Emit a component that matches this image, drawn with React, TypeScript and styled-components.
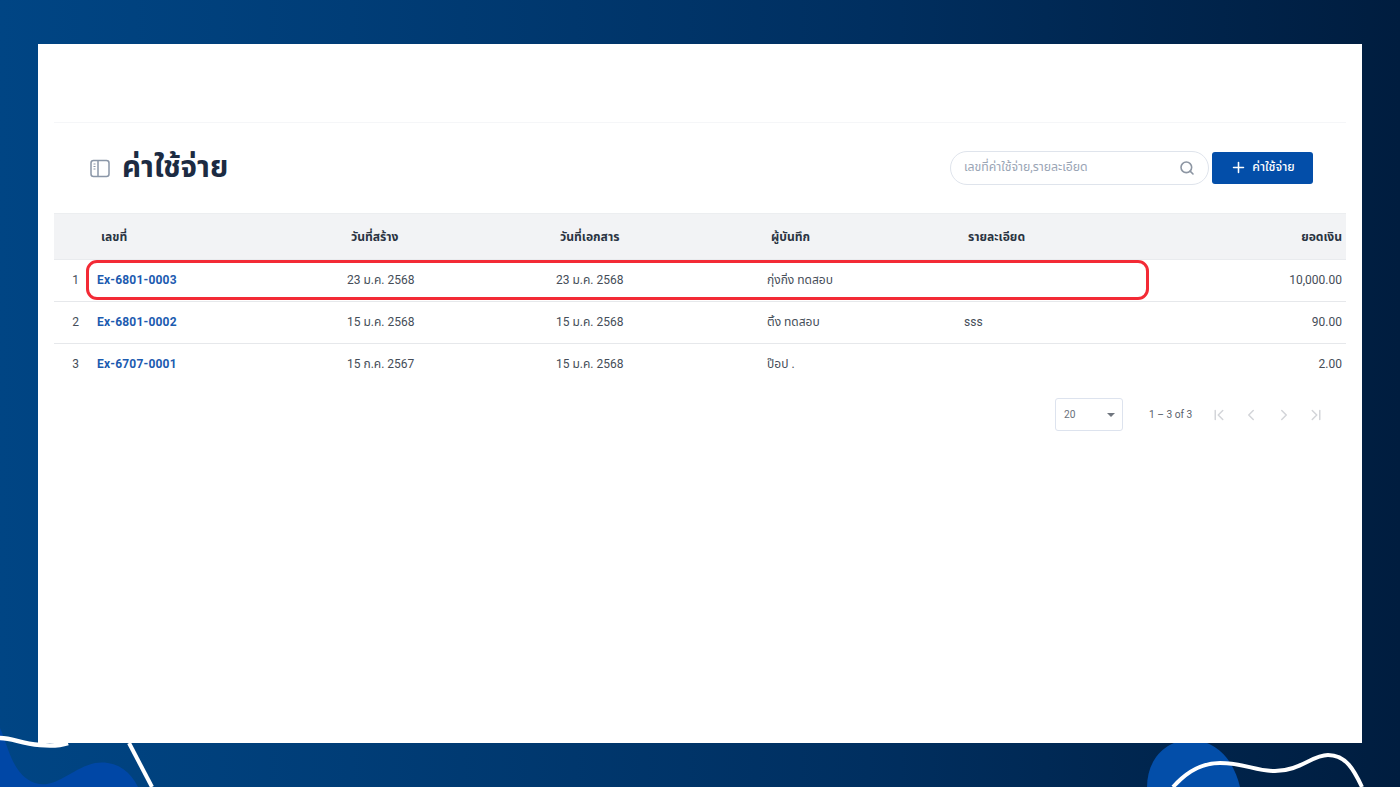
import React from "react";
import styled, { createGlobalStyle } from "styled-components";
import { ChevronLeft, ChevronRight, ChevronFirst, ChevronLast, Plus, Search } from "lucide-react";

const Global = createGlobalStyle`
  html, body { margin: 0; padding: 0; }
  body { font-family: Roboto, "Noto Sans Thai", Inter, "Noto Sans", "Liberation Sans", sans-serif; }
`;

const Stage = styled.div`
  position: relative;
  width: 1400px;
  height: 787px;
  overflow: hidden;
  box-sizing: border-box;
  padding: 44px 38px 44px 38px;
  background: linear-gradient(90deg, #004584 0%, #003d77 25%, #002f60 62%, #001d3f 100%);
`;

const Decor = styled.svg`
  position: absolute;
  left: 0;
  top: 0;
  pointer-events: none;
`;

const Panel = styled.main`
  position: relative;
  height: 100%;
  background: #fff;
  display: flex;
  flex-direction: column;
  padding: 78px 16px 0 16px;
  box-sizing: border-box;
`;

const Header = styled.header`
  border-top: 1px solid #f5f6f8;
  height: 91px;
  box-sizing: border-box;
  display: flex;
  align-items: center;
  padding: 0 33px 0 36px;
`;

const Title = styled.h1`
  margin: 0 0 3px 12px;
  font-size: 29.5px;
  line-height: 34px;
  font-weight: 700;
  color: #1c2b42;
`;

const Spacer = styled.div`
  flex: 1;
`;

const SearchBox = styled.div`
  width: 259px;
  height: 34px;
  margin-top: -1px;
  box-sizing: border-box;
  border: 1.5px solid #dfe4ec;
  border-radius: 17px;
  display: flex;
  align-items: center;
  padding: 0 13px 0 13px;
  color: #9aa5b5;
  font-size: 12.3px;
`;

const AddButton = styled.button`
  width: 101px;
  height: 32px;
  margin: -1px 0 0 3px;
  border: 0;
  border-radius: 3px;
  background: #034ea9;
  color: #fff;
  font: inherit;
  font-size: 12.3px;
  font-weight: 500;
  display: flex;
  align-items: center;
  justify-content: center;
  gap: 5px;
  padding: 0;
`;

const Row = styled.div<{ $head?: boolean; $last?: boolean }>`
  position: relative;
  display: grid;
  grid-template-columns: 43px 250px 209px 211px 197px 1fr auto;
  align-items: center;
  height: ${(p) => (p.$head ? "47px" : "42px")};
  padding-bottom: ${(p) => (p.$head ? "0" : "2px")};
  box-sizing: border-box;
  background: ${(p) => (p.$head ? "#f2f3f5" : "#fff")};
  border-bottom: 1px solid ${(p) => (p.$head ? "#e9ebee" : p.$last ? "transparent" : "#e6e8eb")};
  border-top: ${(p) => (p.$head ? "1px solid #eceef0" : "0")};
  color: #454d58;
  font-size: 12px;
`;

const HeadCell = styled.div<{ $right?: boolean }>`
  font-weight: 700;
  font-size: 12.1px;
  color: #2a3442;
  padding-left: ${(p) => (p.$right ? "0" : "4px")};
  padding-right: ${(p) => (p.$right ? "4px" : "0")};
  text-align: ${(p) => (p.$right ? "right" : "left")};
`;

const Cell = styled.div<{ $right?: boolean }>`
  padding-right: ${(p) => (p.$right ? "4px" : "0")};
  text-align: ${(p) => (p.$right ? "right" : "left")};
  white-space: nowrap;
`;

const IndexCell = styled.div`
  text-align: right;
  padding-right: 18px;
`;

const DocLink = styled.a`
  color: #1c5bb0;
  font-weight: 700;
  font-size: 12px;
  letter-spacing: 0.2px;
`;

const Highlight = styled.div`
  position: absolute;
  left: 32px;
  top: 0;
  width: 1063px;
  height: 40px;
  box-sizing: border-box;
  border: 3px solid #f32a35;
  border-radius: 11px;
`;

const Pager = styled.nav`
  display: flex;
  align-items: center;
  margin-top: 12px;
  padding-left: 1001px;
  color: #5a626d;
  font-size: 10.2px;
`;

const PageSelect = styled.div`
  width: 68px;
  height: 33px;
  box-sizing: border-box;
  border: 1px solid #dde3ee;
  border-radius: 3px;
  display: flex;
  align-items: center;
  justify-content: space-between;
  padding: 0 7px 0 8px;
  color: #6a717b;
`;

const Caret = styled.span`
  width: 0;
  height: 0;
  border-left: 4.5px solid transparent;
  border-right: 4.5px solid transparent;
  border-top: 4.5px solid #70767f;
`;

const RangeText = styled.span`
  margin-left: 26px;
  width: 51px;
  white-space: nowrap;
`;

const PageIcons = styled.div`
  display: flex;
  align-items: center;
  margin-left: 10px;
  gap: 14.3px;
  color: #d3d5d9;
`;

const rows = [
  ["1", "Ex-6801-0003", "23 ม.ค. 2568", "23 ม.ค. 2568", "กุ่งกิ่ง ทดสอบ", "", "10,000.00"],
  ["2", "Ex-6801-0002", "15 ม.ค. 2568", "15 ม.ค. 2568", "ติ้ง ทดสอบ", "sss", "90.00"],
  ["3", "Ex-6707-0001", "15 ก.ค. 2567", "15 ม.ค. 2568", "ป๊อป .", "", "2.00"],
];

export default function App() {
  return (
    <Stage>
      <Global />
      <Decor width="1400" height="787" viewBox="0 0 1400 787">
        <path d="M0 728 C8 745 12 775 35 783 C55 790 72 768 95 763 C115 760 130 770 138 787 L0 787 Z" fill="#0047a6" />
        <path d="M1147 787 C1147 760 1165 740 1190 740 C1220 740 1235 765 1240 787 Z" fill="#034ea9" />
      </Decor>
      <Panel>
        <Header>
          <svg width="20" height="19" viewBox="0 0 20 19" fill="none" stroke="#8b97a8" strokeWidth="1.5">
            <rect x="1" y="1.5" width="18" height="16" rx="2.5" />
            <path d="M8 1.5v16" />
            <path d="M3.5 5h2M3.5 7.5h2M3.5 10h2" strokeWidth="1" />
          </svg>
          <Title>ค่าใช้จ่าย</Title>
          <Spacer />
          <SearchBox>
            <span>เลขที่ค่าใช้จ่าย,รายละเอียด</span>
            <Spacer />
            <Search size={16} strokeWidth={2.4} color="#8d96a3" />
          </SearchBox>
          <AddButton>
            <Plus size={17} strokeWidth={2.2} />
            ค่าใช้จ่าย
          </AddButton>
        </Header>
        <Row $head>
          <div />
          <HeadCell>เลขที่</HeadCell>
          <HeadCell>วันที่สร้าง</HeadCell>
          <HeadCell>วันที่เอกสาร</HeadCell>
          <HeadCell>ผู้บันทึก</HeadCell>
          <HeadCell>รายละเอียด</HeadCell>
          <HeadCell $right>ยอดเงิน</HeadCell>
        </Row>
        {rows.map((r, i) => (
          <Row key={r[0]} $last={i === rows.length - 1}>
            <IndexCell>{r[0]}</IndexCell>
            <Cell>
              <DocLink>{r[1]}</DocLink>
            </Cell>
            <Cell>{r[2]}</Cell>
            <Cell>{r[3]}</Cell>
            <Cell>{r[4]}</Cell>
            <Cell>{r[5]}</Cell>
            <Cell $right>{r[6]}</Cell>
            {i === 0 && <Highlight />}
          </Row>
        ))}
        <Pager>
          <PageSelect>
            20
            <Caret />
          </PageSelect>
          <RangeText>1 – 3 of 3</RangeText>
          <PageIcons>
            <ChevronFirst size={18} />
            <ChevronLeft size={18} />
            <ChevronRight size={18} />
            <ChevronLast size={18} />
          </PageIcons>
        </Pager>
      </Panel>
      <Decor width="1400" height="787" viewBox="0 0 1400 787" fill="none" stroke="#fff">
        <path d="M0 738 C14 738 20 744 40 745 C52 746 62 745 68 743" strokeWidth="4.5" />
        <path d="M129 743 L152 787" strokeWidth="4" />
        <path d="M1173 787 C1190 768 1205 763 1220 763 C1245 763 1255 771 1275 771 C1300 771 1312 755 1328 755 C1346 755 1354 770 1362 787" strokeWidth="4" />
      </Decor>
    </Stage>
  );
}
